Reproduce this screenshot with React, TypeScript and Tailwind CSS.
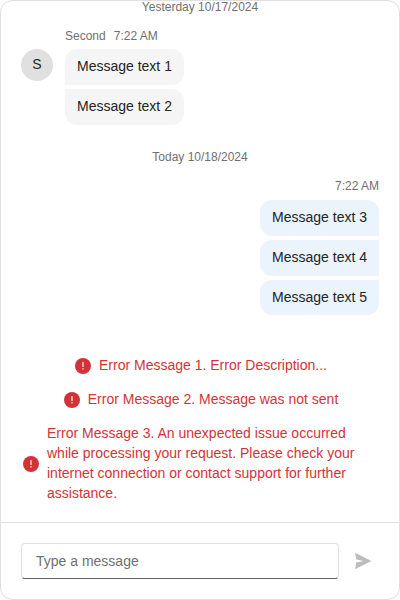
import React from "react";

function ErrorIcon() {
  return (
    <svg className="h-5 w-5 shrink-0" viewBox="0 0 20 20" aria-hidden="true">
      <circle cx="10" cy="10" r="8" fill="#d13438" />
      <path d="M9.35 6.1h1.3v4.9h-1.3zM9.3 12.2h1.4v1.4H9.3z" fill="#fff" fillOpacity="0.85" />
    </svg>
  );
}

function Alert({ text }: { text: string }) {
  return (
    <div className="flex items-center justify-center gap-1.5 py-1.5 text-sm leading-5 text-[#d13438]">
      <ErrorIcon />
      <div className="pb-0.5">{text}</div>
    </div>
  );
}

export default function App() {
  return (
    <div
      className="flex h-[600px] w-[400px] flex-col overflow-hidden rounded-xl border border-[#e0e0e0] bg-white text-sm leading-5 text-[#242424]"
      style={{ fontFamily: '"Liberation Sans", Arial, sans-serif' }}
    >
      <div className="flex flex-1 flex-col overflow-hidden px-5">
        <div className="-mt-0.5 text-center text-xs leading-4 text-[#707070]">Yesterday 10/17/2024</div>
        <div className="mt-[13px] flex gap-3">
          <div className="mt-[21px] flex h-8 w-8 items-center justify-center rounded-full bg-[#e0e0e0] pb-0.5">S</div>
          <div className="flex flex-col items-start">
            <div className="flex gap-2 text-xs leading-4 text-[#707070]">
              <span>Second</span>
              <span>7:22 AM</span>
            </div>
            <div className="mt-[5px] rounded-t-xl rounded-br-xl bg-[#f5f5f5] px-3 pt-[7px] pb-[9px]">Message text 1</div>
            <div className="mt-1 rounded-b-xl rounded-tr-xl bg-[#f5f5f5] px-3 pt-[7px] pb-[9px]">Message text 2</div>
          </div>
        </div>
        <div className="mt-6 text-center text-xs leading-4 text-[#707070]">Today 10/18/2024</div>
        <div className="mt-[13px] flex flex-col items-end">
          <div className="text-xs leading-4 text-[#707070]">7:22 AM</div>
          <div className="mt-[6px] rounded-t-xl rounded-bl-xl bg-[#ebf3fc] px-3 pt-[7px] pb-[9px]">Message text 3</div>
          <div className="mt-1 rounded-l-xl bg-[#ebf3fc] px-3 pt-[7px] pb-[9px]">Message text 4</div>
          <div className="mt-1 rounded-b-xl rounded-tl-xl bg-[#ebf3fc] px-3 pt-[7px] pb-2">Message text 5</div>
        </div>
        <div className="mt-[34px]">
          <Alert text="Error Message 1. Error Description..." />
          <Alert text="Error Message 2. Message was not sent" />
          <Alert text="Error Message 3. An unexpected issue occurred while processing your request. Please check your internet connection or contact support for further assistance." />
        </div>
      </div>
      <div className="flex h-[77px] items-center gap-2 border-t border-[#e0e0e0] px-5">
        <input
          className="h-9 w-[318px] rounded border border-[#e0e0e0] border-b-[#616161] px-3.5 outline-none placeholder:text-[#707070]"
          placeholder="Type a message"
        />
        <button className="flex h-8 w-8 items-center justify-center" aria-label="Send">
          <svg width="20" height="20" viewBox="0 0 20 20" fill="#bdbdbd">
            <path d="M2 1.8 18.4 10 2 18.2 3.4 11.6 10.5 10 3.4 8.4z" />
          </svg>
        </button>
      </div>
    </div>
  );
}
